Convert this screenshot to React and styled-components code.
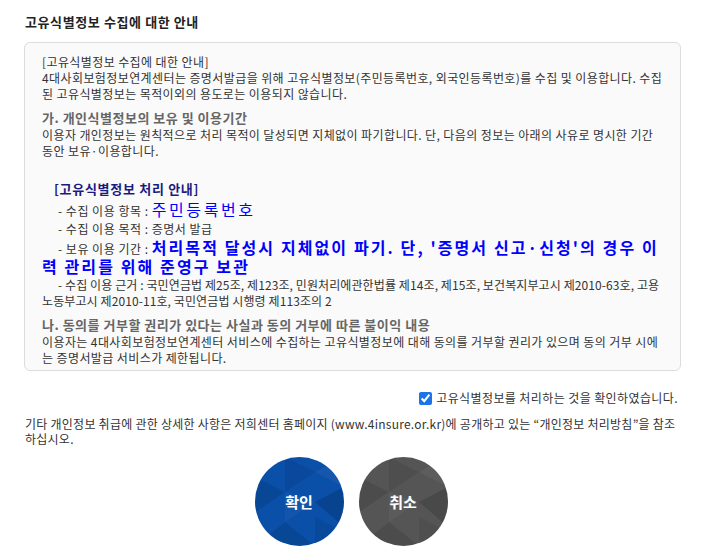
import React from 'react';
import styled, { createGlobalStyle } from 'styled-components';

const GlobalStyle = createGlobalStyle`
  body {
    margin: 0;
    background: #fff;
    font-family: 'Noto Sans CJK KR', 'Noto Sans', sans-serif;
    color: #333;
  }
`;

const Page = styled.div`
  width: 702px;
  padding: 13px 21px 0 24px;
  box-sizing: border-box;
`;

const Title = styled.h2`
  margin: 0 0 11px 1px;
  font-size: 13px;
  line-height: 18px;
  font-weight: bold;
  letter-spacing: 0.6px;
  color: #222;
`;

const Box = styled.div`
  background: #fafafa;
  border: 1px solid #dcdcdc;
  border-radius: 6px;
  padding: 11px 17px 4px 17px;
  font-size: 12px;
  line-height: 16px;
  letter-spacing: 0.4px;
  word-break: break-all;
`;

const Para = styled.p`
  margin: 0;
`;

const Heading = styled.h3`
  margin: 8px 0 1px;
  font-size: 13px;
  line-height: 16px;
  font-weight: bold;
  letter-spacing: 0.5px;
  color: #666;
`;

const Sub = styled.div`
  margin: 22px 0 4px 12px;
  font-size: 13px;
  line-height: 16px;
  font-weight: bold;
  letter-spacing: 0.7px;
  color: #1a1a80;
`;

const Item = styled.div`
  margin-top: ${(p) => p.gap || 0}px;
  text-indent: 16px;
  line-height: ${(p) => p.lh || 16}px;
  letter-spacing: ${(p) => (p.tight ? 0.1 : 0.5)}px;
`;

const Big = styled.span`
  font-size: 16px;
  line-height: 16px;
  letter-spacing: ${(p) => (p.bold ? 2.1 : 2.6)}px;
  color: #0000ff;
  font-weight: ${(p) => (p.bold ? 'bold' : 'normal')};
`;

const ConfirmRow = styled.label`
  display: flex;
  justify-content: flex-end;
  align-items: center;
  gap: 4px;
  margin: 19px 3px 0 0;
  font-size: 12px;
  line-height: 16px;
  letter-spacing: 0.4px;
  color: #333;
`;

const Check = styled.input`
  margin: 0;
  width: 13px;
  height: 13px;
  accent-color: #1a73e8;
`;

const Footer = styled.p`
  margin: 10px 0 0 1px;
  font-size: 12px;
  line-height: 15px;
  letter-spacing: 0.25px;
  color: #333;
  word-break: break-all;
`;

const Buttons = styled.div`
  display: flex;
  justify-content: center;
  gap: 15px;
  margin: 11px 0 0 -24px;
  width: 702px;
`;

const Circle = styled.button`
  position: relative;
  width: 89px;
  height: 89px;
  border-radius: 50%;
  border: none;
  padding: 0;
  overflow: hidden;
  background: ${(p) => p.bg};
  color: #fff;
  font-family: 'Noto Sans CJK KR', sans-serif;
  font-size: 15px;
  font-weight: bold;
  cursor: pointer;
`;

const Pattern = styled.svg`
  position: absolute;
  inset: 0;
`;

const Label = styled.span`
  position: relative;
`;

const Facets = () => (
  <Pattern width="89" height="89" viewBox="0 0 89 89">
    <polygon points="0,20 30,35 0,55" fill="rgba(0,0,0,0.10)" />
    <polygon points="30,0 60,15 30,35" fill="rgba(0,0,0,0.08)" />
    <polygon points="60,15 89,0 89,30" fill="rgba(255,255,255,0.05)" />
    <polygon points="60,45 89,30 89,70" fill="rgba(0,0,0,0.14)" />
    <polygon points="30,65 60,89 0,89" fill="rgba(0,0,0,0.10)" />
    <polygon points="30,35 60,45 30,65" fill="rgba(255,255,255,0.04)" />
    <polygon points="60,60 89,75 60,89" fill="rgba(0,0,0,0.07)" />
  </Pattern>
);

const RoundButton = ({ bg, children }) => (
  <Circle bg={bg}>
    <Facets />
    <Label>{children}</Label>
  </Circle>
);

const App = () => (
  <Page>
    <GlobalStyle />
    <Title>고유식별정보 수집에 대한 안내</Title>
    <Box>
      <Para>[고유식별정보 수집에 대한 안내]</Para>
      <Para>
        4대사회보험정보연계센터는 증명서발급을 위해 고유식별정보(주민등록번호, 외국인등록번호)를 수집 및 이용합니다. 수집된 고유식별정보는 목적이외의 용도로는 이용되지 않습니다.
      </Para>
      <Heading>가. 개인식별정보의 보유 및 이용기간</Heading>
      <Para>
        이용자 개인정보는 원칙적으로 처리 목적이 달성되면 지체없이 파기합니다. 단, 다음의 정보는 아래의 사유로 명시한 기간 동안 보유·이용합니다.
      </Para>
      <Sub>[고유식별정보 처리 안내]</Sub>
      <Item lh={20}>
        - 수집 이용 항목 : <Big>주민등록번호</Big>
      </Item>
      <Item>- 수집 이용 목적 : 증명서 발급</Item>
      <Item lh={19} gap={2}>
        - 보유 이용 기간 : <Big bold>처리목적 달성시 지체없이 파기. 단, '증명서 신고·신청'의 경우 이력 관리를 위해 준영구 보관</Big>
      </Item>
      <Item tight>
        - 수집 이용 근거 : 국민연금법 제25조, 제123조, 민원처리에관한법률 제14조, 제15조, 보건복지부고시 제2010-63호, 고용노동부고시 제2010-11호, 국민연금법 시행령 제113조의 2
      </Item>
      <Heading>나. 동의를 거부할 권리가 있다는 사실과 동의 거부에 따른 불이익 내용</Heading>
      <Para>
        이용자는 4대사회보험정보연계센터 서비스에 수집하는 고유식별정보에 대해 동의를 거부할 권리가 있으며 동의 거부 시에는 증명서발급 서비스가 제한됩니다.
      </Para>
    </Box>
    <ConfirmRow>
      <Check type="checkbox" defaultChecked />
      고유식별정보를 처리하는 것을 확인하였습니다.
    </ConfirmRow>
    <Footer>
      기타 개인정보 취급에 관한 상세한 사항은 저희센터 홈페이지 (www.4insure.or.kr)에 공개하고 있는 “개인정보 처리방침”을 참조하십시오.
    </Footer>
    <Buttons>
      <RoundButton bg="#0a4fa8">확인</RoundButton>
      <RoundButton bg="#555555">취소</RoundButton>
    </Buttons>
  </Page>
);

export default App;
